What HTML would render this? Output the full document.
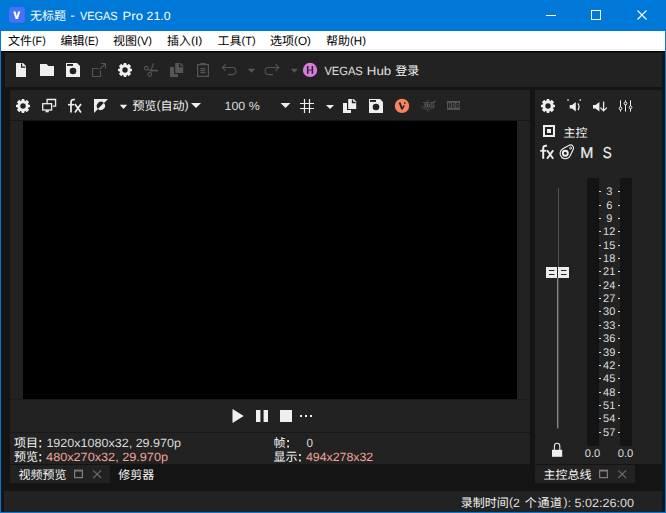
<!DOCTYPE html>
<html lang="zh"><head><meta charset="utf-8"><title>VEGAS Pro 21.0</title>
<style>
html,body{margin:0;padding:0;}
body{width:666px;height:513px;overflow:hidden;background:#141414;position:relative;font-family:"Liberation Sans","Noto Sans CJK SC",sans-serif;}
.b{position:absolute;}
#ov{position:absolute;left:0;top:0;}
#ov text{font-family:"Liberation Sans","Noto Sans CJK SC",sans-serif;text-rendering:geometricPrecision;}
</style></head><body>
<div class="b" style="left:0;top:0;width:666px;height:513px;background:#0078d7"></div>
<div class="b" style="left:1px;top:31px;width:664px;height:481px;background:#141414"></div>
<div class="b" id="menubar" role="menubar" aria-label="文件(F) 编辑(E) 视图(V) 插入(I) 工具(T) 选项(O) 帮助(H)" style="left:1px;top:31px;width:664px;height:20px;background:#fff"></div>
<div class="b" style="left:1px;top:49px;width:664px;height:1px;background:#f0f0f0"></div>
<div class="b" style="left:1px;top:51px;width:664px;height:1px;background:#000"></div>
<div class="b" id="toolbar" role="toolbar" aria-label="VEGAS Hub 登录" style="left:5px;top:53px;width:657px;height:34px;background:#222222"></div>
<div class="b" id="preview" aria-label="视频预览" style="left:10px;top:90px;width:520px;height:374px;background:#222222"></div>
<div class="b" style="left:10px;top:120px;width:520px;height:1px;background:#161616"></div>
<div class="b" style="left:10px;top:399px;width:520px;height:1px;background:#1b1b1b"></div>
<div class="b" id="video" style="left:23px;top:121px;width:494px;height:278px;background:#000"></div>
<div class="b" style="left:10px;top:432px;width:520px;height:1px;background:#181818"></div>
<div class="b" id="tab1" style="left:10px;top:465px;width:100px;height:18px;background:#222222"></div>
<div class="b" id="mixer" aria-label="主控总线" style="left:535px;top:90px;width:127px;height:374px;background:#222222"></div>
<div class="b" style="left:587px;top:178px;width:12px;height:268px;background:#141414"></div>
<div class="b" style="left:620px;top:178px;width:12px;height:268px;background:#141414"></div>
<div class="b" id="tab2" style="left:535px;top:465px;width:100px;height:18px;background:#222222"></div>
<div class="b" id="status" role="status" aria-label="录制时间(2 个通道): 5:02:26:00" style="left:4px;top:491px;width:658px;height:21px;background:#222222"></div>
<svg id="ov" width="666" height="513" viewBox="0 0 666 513">
<rect x="9" y="7" width="15.8" height="15.8" rx="2.5" fill="#4870f8"/>
<path d="M13.3 11.5H15.6L16.8 16.2L18 11.5H20.3L17.95 18.9H15.65Z" fill="#fff"/>
<text x="30.00" y="20.00" font-size="12" fill="#fff">无标题</text>
<rect x="71" y="15.6" width="3.4" height="1.1" fill="#fff"/>
<text x="80.00" y="20.00" font-size="12" fill="#fff" textLength="37.60" lengthAdjust="spacingAndGlyphs">VEGAS</text>
<text x="122.60" y="20.00" font-size="12" fill="#fff" textLength="20.30" lengthAdjust="spacingAndGlyphs">Pro</text>
<text x="146.60" y="20.00" font-size="12" fill="#fff" textLength="23.90" lengthAdjust="spacingAndGlyphs">21.0</text>
<path d="M546 15.5H556" stroke="#fff" stroke-width="1"/>
<rect x="591.5" y="10.5" width="9" height="9" fill="none" stroke="#fff" stroke-width="1"/>
<path d="M637.5 10.5L646.5 19.5M646.5 10.5L637.5 19.5" stroke="#fff" stroke-width="1.1"/>
<text x="8.00" y="45.00" font-size="12" fill="#000">文件</text>
<text x="32.00" y="44.30" font-size="10.80" fill="#000" textLength="3.60" lengthAdjust="spacingAndGlyphs">(</text>
<text x="35.60" y="45.00" font-size="12" fill="#000" textLength="6.60" lengthAdjust="spacingAndGlyphs">F</text>
<text x="42.20" y="44.30" font-size="10.80" fill="#000" textLength="3.60" lengthAdjust="spacingAndGlyphs">)</text>
<text x="60.40" y="45.00" font-size="12" fill="#000">编辑</text>
<text x="84.40" y="44.30" font-size="10.80" fill="#000" textLength="3.50" lengthAdjust="spacingAndGlyphs">(</text>
<text x="87.90" y="45.00" font-size="12" fill="#000" textLength="7.01" lengthAdjust="spacingAndGlyphs">E</text>
<text x="94.90" y="44.30" font-size="10.80" fill="#000" textLength="3.50" lengthAdjust="spacingAndGlyphs">)</text>
<text x="113.00" y="45.00" font-size="12" fill="#000">视图</text>
<text x="137.00" y="44.30" font-size="10.80" fill="#000" textLength="3.75" lengthAdjust="spacingAndGlyphs">(</text>
<text x="140.75" y="45.00" font-size="12" fill="#000" textLength="7.51" lengthAdjust="spacingAndGlyphs">V</text>
<text x="148.25" y="44.30" font-size="10.80" fill="#000" textLength="3.75" lengthAdjust="spacingAndGlyphs">)</text>
<text x="167.00" y="45.00" font-size="12" fill="#000">插入</text>
<text x="191.00" y="44.30" font-size="10.80" fill="#000" textLength="4.02" lengthAdjust="spacingAndGlyphs">(</text>
<text x="195.02" y="45.00" font-size="12" fill="#000" textLength="3.36" lengthAdjust="spacingAndGlyphs">I</text>
<text x="198.38" y="44.30" font-size="10.80" fill="#000" textLength="4.02" lengthAdjust="spacingAndGlyphs">)</text>
<text x="217.50" y="45.00" font-size="12" fill="#000">工具</text>
<text x="241.50" y="44.30" font-size="10.80" fill="#000" textLength="3.68" lengthAdjust="spacingAndGlyphs">(</text>
<text x="245.18" y="45.00" font-size="12" fill="#000" textLength="6.75" lengthAdjust="spacingAndGlyphs">T</text>
<text x="251.92" y="44.30" font-size="10.80" fill="#000" textLength="3.68" lengthAdjust="spacingAndGlyphs">)</text>
<text x="270.00" y="45.00" font-size="12" fill="#000">选项</text>
<text x="294.00" y="44.30" font-size="10.80" fill="#000" textLength="3.92" lengthAdjust="spacingAndGlyphs">(</text>
<text x="297.92" y="45.00" font-size="12" fill="#000" textLength="9.16" lengthAdjust="spacingAndGlyphs">O</text>
<text x="307.08" y="44.30" font-size="10.80" fill="#000" textLength="3.92" lengthAdjust="spacingAndGlyphs">)</text>
<text x="326.00" y="45.00" font-size="12" fill="#000">帮助</text>
<text x="350.00" y="44.30" font-size="10.80" fill="#000" textLength="3.84" lengthAdjust="spacingAndGlyphs">(</text>
<text x="353.84" y="45.00" font-size="12" fill="#000" textLength="8.32" lengthAdjust="spacingAndGlyphs">H</text>
<text x="362.16" y="44.30" font-size="10.80" fill="#000" textLength="3.84" lengthAdjust="spacingAndGlyphs">)</text>
<path d="M16 63H23L26 66V77H16Z" fill="#efefef"/><path d="M21.6 63.4V67.1H25.4" stroke="#222222" stroke-width="1.2" fill="none"/>
<path d="M40 64H46.5L48.5 66H54V76H40Z" fill="#efefef"/>
<path d="M66 63H77L80 66V77H66Z" fill="#efefef"/><rect x="67" y="64" width="6" height="1.9" fill="#222222"/><circle cx="73.0" cy="71.0" r="3.3" fill="#222222"/>
<path d="M98.5 68.5H92.5V76.5H100.5V70.5" fill="none" stroke="#555" stroke-width="1.1"/><path d="M99.8 69.2L105.5 63.5M101 63.5H105.5V68.6" fill="none" stroke="#555" stroke-width="1.1"/>
<path d="M123.17 65.03 L123.89 62.99 L126.11 62.99 L126.83 65.03 L127.22 65.19 L128.76 63.86 L131.14 66.24 L129.81 67.78 L129.97 68.17 L132.01 68.89 L132.01 71.11 L129.97 71.83 L129.81 72.22 L131.14 73.76 L128.76 76.14 L127.22 74.81 L126.83 74.97 L126.11 77.01 L123.89 77.01 L123.17 74.97 L122.78 74.81 L121.24 76.14 L118.86 73.76 L120.19 72.22 L120.03 71.83 L117.99 71.11 L117.99 68.89 L120.03 68.17 L120.19 67.78 L118.86 66.24 L121.24 63.86 L122.78 65.19Z M122.30 70.00 a2.7 2.7 0 1 0 5.4 0 a2.7 2.7 0 1 0 -5.4 0Z" fill="#efefef" fill-rule="evenodd"/>
<g fill="none" stroke="#555" stroke-width="1.1"><circle cx="146.3" cy="68.3" r="1.9"/><circle cx="149.8" cy="74.5" r="1.9"/><path d="M148 69.2L150.4 70.4H158"/><path d="M150.2 72.6L153.6 63.2"/></g><rect x="152" y="70.2" width="6" height="1.2" fill="#555"/>
<path d="M170 67H174V74H178V77H170Z" fill="#555"/><path d="M175.2 63H180.7L183.2 65.5V72.9H175.2Z" fill="#555"/><path d="M179.5 63.4V66.5H182.6" stroke="#222222" stroke-width="1.3" fill="none"/>
<g fill="none" stroke="#555" stroke-width="1.25"><rect x="197.6" y="64.6" width="10.8" height="11.8"/><path d="M200.4 68.6H205.4M200.4 70.6H205.4M200.4 72.6H205.4"/></g><rect x="200.4" y="62.9" width="5.2" height="1.6" fill="#555"/>
<path d="M225.8 64.2L222.5 67.5L225.8 70.8M222.5 67.5H232.4A3.55 3.55 0 0 1 232.4 74.6H228.2" fill="none" stroke="#555" stroke-width="1.1"/>
<path d="M247.7 68.8H255.3L251.5 72.8Z" fill="#555"/>
<path d="M275.6 64.2L278.9 67.5L275.6 70.8M278.9 67.5H268.6A3.55 3.55 0 0 0 268.6 74.6H273" fill="none" stroke="#555" stroke-width="1.1"/>
<path d="M290.7 68.8H298.1L294.4 72.8Z" fill="#555"/>
<circle cx="310.05" cy="69.95" r="7.15" fill="#dc78e2"/>
<rect x="306.95" y="66" width="1.55" height="7.8" fill="#222"/><rect x="311.6" y="66" width="1.55" height="7.8" fill="#222"/><rect x="308.5" y="69.55" width="3.1" height="1.1" fill="#3c3040"/>
<text x="324.40" y="75.00" font-size="12" fill="#e0e0e0" textLength="38.40" lengthAdjust="spacingAndGlyphs">VEGAS</text>
<text x="366.80" y="75.00" font-size="12" fill="#e0e0e0" textLength="24.40" lengthAdjust="spacingAndGlyphs">Hub</text>
<text x="395.20" y="75.00" font-size="12" fill="#f4f4f4">登录</text>
<path d="M21.17 101.03 L21.89 98.99 L24.11 98.99 L24.83 101.03 L25.22 101.19 L26.76 99.86 L29.14 102.24 L27.81 103.78 L27.97 104.17 L30.01 104.89 L30.01 107.11 L27.97 107.83 L27.81 108.22 L29.14 109.76 L26.76 112.14 L25.22 110.81 L24.83 110.97 L24.11 113.01 L21.89 113.01 L21.17 110.97 L20.78 110.81 L19.24 112.14 L16.86 109.76 L18.19 108.22 L18.03 107.83 L15.99 107.11 L15.99 104.89 L18.03 104.17 L18.19 103.78 L16.86 102.24 L19.24 99.86 L20.78 101.19Z M20.30 106.00 a2.7 2.7 0 1 0 5.4 0 a2.7 2.7 0 1 0 -5.4 0Z" fill="#efefef" fill-rule="evenodd"/>
<g fill="none" stroke="#efefef" stroke-width="1.3"><path d="M47.1 103V99.5H55.6V106.2H52.8"/><rect x="42.7" y="103.7" width="8.9" height="6.3"/></g><rect x="45.6" y="110.4" width="3.2" height="1.9" fill="#efefef"/>
<g fill="none" stroke="#efefef" stroke-width="1.75"><path d="M71 112.6V102.3Q71 99.0 74.8 99.69999999999999"/><path d="M68 104.69999999999999H74.1" stroke-width="1.6"/><path d="M74.9 104.1L81 112.6M81 104.1L74.9 112.6" stroke-width="1.7"/></g>
<path d="M94 99H108L94 113Z" fill="#efefef"/><path d="M94.5 112.5L107.5 99.5V112.5Z" fill="none" stroke="#efefef" stroke-width="0"/><path d="M97.9 108.9 A4.25 4.25 0 0 1 103.9 102.9 Z" fill="#222222"/><path d="M103.9 102.9 A4.25 4.25 0 0 1 97.9 108.9 Z" fill="#efefef"/>
<path d="M119.8 104.8H127.2L123.5 108.9Z" fill="#efefef"/>
<text x="132.40" y="110.00" font-size="12" fill="#f4f4f4">预览</text>
<text x="156.40" y="109.10" font-size="12.00" fill="#e4e4e4" textLength="4.20" lengthAdjust="spacingAndGlyphs">(</text>
<text x="160.60" y="110.00" font-size="12" fill="#f4f4f4">自动</text>
<text x="184.60" y="109.10" font-size="12.00" fill="#e4e4e4" textLength="4.20" lengthAdjust="spacingAndGlyphs">)</text>
<path d="M191 103H201L196 108Z" fill="#efefef"/>
<text x="224.50" y="110.00" font-size="12" fill="#dcdcdc" textLength="35.20" lengthAdjust="spacingAndGlyphs">100 %</text>
<path d="M280.6 103H290.4L285.5 108Z" fill="#efefef"/>
<path d="M304.5 99V113M309.5 99V113M300 103.5H314M300 108.5H314" stroke="#efefef" stroke-width="1.2" fill="none"/>
<path d="M326 105H334L330 109Z" fill="#efefef"/>
<path d="M343 103H347V110H351V113H343Z" fill="#efefef"/><path d="M348.2 99H353.7L356.2 101.5V108.9H348.2Z" fill="#efefef"/><path d="M352.5 99.4V102.5H355.6" stroke="#222222" stroke-width="1.3" fill="none"/>
<path d="M369 99H380L383 102V113H369Z" fill="#efefef"/><rect x="370" y="100" width="6" height="1.9" fill="#222222"/><circle cx="376.0" cy="107.0" r="3.3" fill="#222222"/>
<circle cx="402" cy="105.9" r="7.2" fill="#f8835f"/>
<path d="M398.6 102.4H400.7L402.2 107.3L403.5 105.2H405L402.8 109.6H401.2Z" fill="#222"/><circle cx="404.8" cy="103.1" r="0.85" fill="#222"/>
<g fill="none" stroke="#474343" stroke-width="1"><path d="M421.2 105.6C421.4 110.6 434.6 110.6 434.8 105.6"/><path d="M429.2 99.8C425.4 98.6 425.2 113 429.4 112"/></g>
<g fill="none" stroke="#5c5858" stroke-width="1"><path d="M423.2 102.5H425.3V104.7H423.9M425.3 104.7V107H423.2"/><path d="M429.5 102.5H427.4V107H429.5V104.7H427.4"/><rect x="431.1" y="102.5" width="2.1" height="4.5"/><circle cx="434.6" cy="101.6" r="0.6"/></g>
<rect x="447" y="101" width="13" height="8.9" fill="#555"/>
<g fill="none" stroke="#222" stroke-width="1"><path d="M448.5 102.8V108M450.6 102.8V108M448.5 105.4H450.6"/><path d="M452.7 102.8V108M452.7 103.3H453.9Q455 103.3 455 105.4Q455 107.5 453.9 107.5H452.7"/><path d="M456.9 102.8V108M456.9 103.3H458.4Q459.2 103.3 459.2 104.5Q459.2 105.7 458.4 105.7H456.9M457.9 105.8L459.3 108"/></g>
<path d="M232.5 409L243.8 416L232.5 423Z" fill="#efefef"/>
<rect x="256" y="410" width="4.4" height="12" fill="#efefef"/><rect x="263.6" y="410" width="4.4" height="12" fill="#efefef"/>
<rect x="280" y="410" width="12" height="12" fill="#efefef"/>
<rect x="300" y="415" width="2" height="2" fill="#efefef"/>
<rect x="305" y="415" width="2" height="2" fill="#efefef"/>
<rect x="310" y="415" width="2" height="2" fill="#efefef"/>
<text x="14.00" y="447.00" font-size="12" fill="#f4f4f4">项目</text>
<rect x="39.40" y="440.10" width="1.8" height="1.9" fill="#ececec"/><rect x="39.40" y="445.60" width="1.8" height="1.9" fill="#ececec"/>
<text x="46.40" y="446.80" font-size="12" fill="#dcdcdc" textLength="134.60" lengthAdjust="spacingAndGlyphs">1920x1080x32, 29.970p</text>
<text x="14.00" y="461.00" font-size="12" fill="#f4f4f4">预览</text>
<rect x="39.40" y="454.10" width="1.8" height="1.9" fill="#ececec"/><rect x="39.40" y="459.60" width="1.8" height="1.9" fill="#ececec"/>
<text x="46.10" y="460.80" font-size="12" fill="#f0a59a" textLength="121.90" lengthAdjust="spacingAndGlyphs">480x270x32, 29.970p</text>
<text x="273.50" y="447.00" font-size="12" fill="#f4f4f4">帧</text>
<rect x="287.20" y="440.10" width="1.8" height="1.9" fill="#ececec"/><rect x="287.20" y="445.60" width="1.8" height="1.9" fill="#ececec"/>
<text x="306.50" y="446.80" font-size="12" fill="#dcdcdc" textLength="6.50" lengthAdjust="spacingAndGlyphs">0</text>
<text x="273.50" y="461.00" font-size="12" fill="#f4f4f4">显示</text>
<rect x="299.00" y="454.10" width="1.8" height="1.9" fill="#ececec"/><rect x="299.00" y="459.60" width="1.8" height="1.9" fill="#ececec"/>
<text x="305.90" y="460.80" font-size="12" fill="#f0a59a" textLength="67.30" lengthAdjust="spacingAndGlyphs">494x278x32</text>
<text x="18.50" y="478.50" font-size="12" fill="#f4f4f4">视频预览</text>
<rect x="74.6" y="470.4" width="7.8" height="7.2" fill="none" stroke="#857a7f" stroke-width="1.2"/><rect x="74" y="469.8" width="9" height="1.7" fill="#857a7f"/><path d="M93.2 470.4L101.1 478M101.1 470.4L93.2 478" stroke="#72686c" stroke-width="1.1" fill="none"/>
<text x="118.20" y="478.50" font-size="12" fill="#f4f4f4">修剪器</text>
<text x="543.60" y="478.50" font-size="12" fill="#f4f4f4">主控总线</text>
<rect x="599.6" y="470.4" width="7.8" height="7.2" fill="none" stroke="#857a7f" stroke-width="1.2"/><rect x="599" y="469.8" width="9" height="1.7" fill="#857a7f"/><path d="M618.2 470.4L626.1 478M626.1 470.4L618.2 478" stroke="#72686c" stroke-width="1.1" fill="none"/>
<text x="460.70" y="507.00" font-size="12" fill="#f4f4f4">录制时间</text>
<text x="508.90" y="506.00" font-size="12.00" fill="#dcdcdc" textLength="4.08" lengthAdjust="spacingAndGlyphs">(</text>
<text x="512.98" y="507.00" font-size="12" fill="#dcdcdc" textLength="6.82" lengthAdjust="spacingAndGlyphs">2</text>
<text x="524.80" y="507.00" font-size="12" fill="#f4f4f4">个</text>
<text x="537.40" y="507.00" font-size="12" fill="#f4f4f4">通</text>
<text x="550.00" y="507.00" font-size="12" fill="#f4f4f4">道</text>
<text x="563.60" y="506.00" font-size="12.00" fill="#dcdcdc" textLength="4.03" lengthAdjust="spacingAndGlyphs">)</text>
<text x="567.63" y="507.00" font-size="12" fill="#dcdcdc" textLength="3.37" lengthAdjust="spacingAndGlyphs">:</text>
<text x="574.60" y="507.00" font-size="12" fill="#dcdcdc" textLength="59.40" lengthAdjust="spacingAndGlyphs">5:02:26:00</text>
<path d="M546.17 101.03 L546.89 98.99 L549.11 98.99 L549.83 101.03 L550.22 101.19 L551.76 99.86 L554.14 102.24 L552.81 103.78 L552.97 104.17 L555.01 104.89 L555.01 107.11 L552.97 107.83 L552.81 108.22 L554.14 109.76 L551.76 112.14 L550.22 110.81 L549.83 110.97 L549.11 113.01 L546.89 113.01 L546.17 110.97 L545.78 110.81 L544.24 112.14 L541.86 109.76 L543.19 108.22 L543.03 107.83 L540.99 107.11 L540.99 104.89 L543.03 104.17 L543.19 103.78 L541.86 102.24 L544.24 99.86 L545.78 101.19Z M545.30 106.00 a2.7 2.7 0 1 0 5.4 0 a2.7 2.7 0 1 0 -5.4 0Z" fill="#efefef" fill-rule="evenodd"/>
<path d="M569.7 105H572L575.8 101.9V111.6L572 108.6H569.7Z" fill="#efefef"/><path d="M577.8 103.4Q580.3 106.8 577.8 110.2" fill="none" stroke="#efefef" stroke-width="1.2"/><rect x="567.3" y="99.3" width="1.5" height="1.5" fill="#d8e8e4"/><rect x="579.5" y="99.3" width="1.5" height="1.5" fill="#d8e8e4"/>
<path d="M593 105H595.5L599.4 101.9V111.6L595.5 108.6H593Z" fill="#efefef"/><path d="M603.6 101.5V110.6M600.4 107.6L603.6 110.9L606.8 107.6" fill="none" stroke="#efefef" stroke-width="1.25"/>
<g stroke="#efefef" stroke-width="1" fill="none"><path d="M620.5 100.3V111.6M625.5 100.3V111.6M630.5 100.3V111.6"/></g><g stroke="#efefef" stroke-width="1" fill="#222222"><circle cx="620.5" cy="108.4" r="1.4"/><circle cx="625.5" cy="103.4" r="1.4"/><circle cx="630.5" cy="107.3" r="1.4"/></g>
<rect x="544" y="126" width="10" height="10" fill="none" stroke="#efefef" stroke-width="2"/><rect x="547" y="129" width="4" height="4" fill="#efefef"/>
<text x="563.50" y="136.50" font-size="12" fill="#f4f4f4">主控</text>
<g fill="none" stroke="#efefef" stroke-width="1.95"><path d="M543.2 158.7V148.39999999999998Q543.2 145.1 547.0 145.79999999999998"/><path d="M540.2 150.79999999999998H546.3000000000001" stroke-width="1.8"/><path d="M547.1 150.2L553.2 158.7M553.2 150.2L547.1 158.7" stroke-width="1.9"/></g>
<path d="M570.16 155.73 L573.30 149.32 A3.0 3.0 0 0 0 569.18 145.36 L562.89 148.73 A5.3 5.3 0 1 0 570.16 155.73Z" fill="none" stroke="#efefef" stroke-width="1.15"/><circle cx="565.3" cy="153.3" r="2.5" fill="none" stroke="#efefef" stroke-width="1.9"/><circle cx="570.7" cy="148.1" r="1.05" fill="none" stroke="#efefef" stroke-width="0.9"/>
<text x="580.2" y="157.7" font-size="15.8" fill="#efefef" stroke="#efefef" stroke-width="0.2">M</text>
<text x="602.8" y="157.7" font-size="15.8" fill="#efefef" stroke="#efefef" stroke-width="0.2" textLength="8.9" lengthAdjust="spacingAndGlyphs">S</text>
<rect x="599" y="191" width="2" height="1" fill="#ddd"/><rect x="618" y="191" width="2" height="1" fill="#ddd"/>
<text x="606.14" y="195.4" font-size="11" fill="#dcdcdc">3</text>
<rect x="599" y="205" width="2" height="1" fill="#ddd"/><rect x="618" y="205" width="2" height="1" fill="#ddd"/>
<text x="606.14" y="209.4" font-size="11" fill="#dcdcdc">6</text>
<rect x="599" y="218" width="2" height="1" fill="#ddd"/><rect x="618" y="218" width="2" height="1" fill="#ddd"/>
<text x="606.14" y="222.4" font-size="11" fill="#dcdcdc">9</text>
<rect x="599" y="231" width="2" height="1" fill="#ddd"/><rect x="618" y="231" width="2" height="1" fill="#ddd"/>
<text x="603.08" y="235.4" font-size="11" fill="#dcdcdc">12</text>
<rect x="599" y="245" width="2" height="1" fill="#ddd"/><rect x="618" y="245" width="2" height="1" fill="#ddd"/>
<text x="603.08" y="249.4" font-size="11" fill="#dcdcdc">15</text>
<rect x="599" y="258" width="2" height="1" fill="#ddd"/><rect x="618" y="258" width="2" height="1" fill="#ddd"/>
<text x="603.08" y="262.4" font-size="11" fill="#dcdcdc">18</text>
<rect x="599" y="271" width="2" height="1" fill="#ddd"/><rect x="618" y="271" width="2" height="1" fill="#ddd"/>
<text x="603.08" y="275.4" font-size="11" fill="#dcdcdc">21</text>
<rect x="599" y="285" width="2" height="1" fill="#ddd"/><rect x="618" y="285" width="2" height="1" fill="#ddd"/>
<text x="603.08" y="289.4" font-size="11" fill="#dcdcdc">24</text>
<rect x="599" y="298" width="2" height="1" fill="#ddd"/><rect x="618" y="298" width="2" height="1" fill="#ddd"/>
<text x="603.08" y="302.4" font-size="11" fill="#dcdcdc">27</text>
<rect x="599" y="311" width="2" height="1" fill="#ddd"/><rect x="618" y="311" width="2" height="1" fill="#ddd"/>
<text x="603.08" y="315.4" font-size="11" fill="#dcdcdc">30</text>
<rect x="599" y="325" width="2" height="1" fill="#ddd"/><rect x="618" y="325" width="2" height="1" fill="#ddd"/>
<text x="603.08" y="329.4" font-size="11" fill="#dcdcdc">33</text>
<rect x="599" y="338" width="2" height="1" fill="#ddd"/><rect x="618" y="338" width="2" height="1" fill="#ddd"/>
<text x="603.08" y="342.4" font-size="11" fill="#dcdcdc">36</text>
<rect x="599" y="352" width="2" height="1" fill="#ddd"/><rect x="618" y="352" width="2" height="1" fill="#ddd"/>
<text x="603.08" y="356.4" font-size="11" fill="#dcdcdc">39</text>
<rect x="599" y="365" width="2" height="1" fill="#ddd"/><rect x="618" y="365" width="2" height="1" fill="#ddd"/>
<text x="603.08" y="369.4" font-size="11" fill="#dcdcdc">42</text>
<rect x="599" y="378" width="2" height="1" fill="#ddd"/><rect x="618" y="378" width="2" height="1" fill="#ddd"/>
<text x="603.08" y="382.4" font-size="11" fill="#dcdcdc">45</text>
<rect x="599" y="392" width="2" height="1" fill="#ddd"/><rect x="618" y="392" width="2" height="1" fill="#ddd"/>
<text x="603.08" y="396.4" font-size="11" fill="#dcdcdc">48</text>
<rect x="599" y="405" width="2" height="1" fill="#ddd"/><rect x="618" y="405" width="2" height="1" fill="#ddd"/>
<text x="603.08" y="409.4" font-size="11" fill="#dcdcdc">51</text>
<rect x="599" y="418" width="2" height="1" fill="#ddd"/><rect x="618" y="418" width="2" height="1" fill="#ddd"/>
<text x="603.08" y="422.4" font-size="11" fill="#dcdcdc">54</text>
<rect x="599" y="432" width="2" height="1" fill="#ddd"/><rect x="618" y="432" width="2" height="1" fill="#ddd"/>
<text x="603.08" y="436.4" font-size="11" fill="#dcdcdc">57</text>
<text x="584.70" y="457.20" font-size="11" fill="#dcdcdc" textLength="15.50" lengthAdjust="spacingAndGlyphs">0.0</text>
<text x="617.70" y="457.20" font-size="11" fill="#dcdcdc" textLength="15.60" lengthAdjust="spacingAndGlyphs">0.0</text>
<rect x="558" y="188" width="1" height="79" fill="#525252"/><rect x="557" y="278" width="1" height="150" fill="#868686"/><rect x="558" y="278" width="1" height="150" fill="#484848"/><rect x="556" y="428" width="3" height="1" fill="#353535"/>
<rect x="546" y="267" width="11" height="11" fill="#ededed"/><rect x="558" y="267" width="11" height="11" fill="#ededed"/>
<rect x="549" y="270" width="5.4" height="1" fill="#222"/><rect x="549" y="274" width="5.4" height="1" fill="#222"/>
<rect x="561" y="270" width="5.4" height="1" fill="#222"/><rect x="561" y="274" width="5.4" height="1" fill="#222"/>
<rect x="552" y="449.8" width="10.2" height="7" fill="#efefef"/><path d="M554.4 450V446.1A2.7 2.9 0 0 1 559.8 446.1V450" fill="none" stroke="#efefef" stroke-width="1.1"/>
</svg>
</body></html>
